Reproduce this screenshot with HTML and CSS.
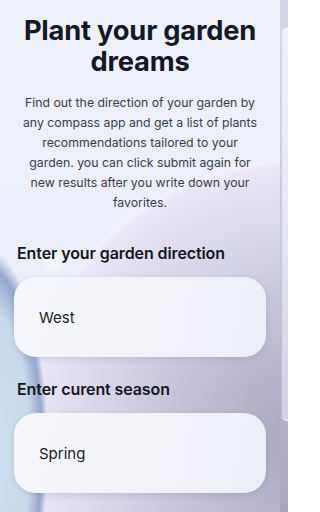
FILE: index.html
```html
<!DOCTYPE html>
<html lang="en">
<head>
<meta charset="utf-8">
<title>Plant your garden dreams</title>
<link rel="stylesheet" href="styles.css">
</head>
<body>
<div class="screen">
  <main class="page">
    <h1 class="title">Plant your garden dreams</h1>
    <p class="intro">Find out the direction of your garden by any compass app and get a list of plants recommendations tailored to your garden. you can click submit again for new results after you write down your favorites.</p>
    <section class="field">
      <label class="label" for="dir">Enter your garden direction</label>
      <div class="input" id="dir">West</div>
    </section>
    <section class="field">
      <label class="label" for="season">Enter curent season</label>
      <div class="input" id="season">Spring</div>
    </section>
  </main>
  <aside class="edge"><div class="edge-card"></div></aside>
</div>
</body>
</html>
```

FILE: styles.css
```css
html, body {
  margin: 0;
  padding: 0;
  width: 288px;
  height: 512px;
  overflow: hidden;
}

body {
  font-family: Inter, "Noto Sans", sans-serif;
}

.screen {
  display: flex;
  width: 288px;
  height: 512px;
}

.page {
  width: 280px;
  height: 512px;
  box-sizing: border-box;
  padding: 15px 14px 0 14px;
  display: flex;
  flex-direction: column;
  background:
    radial-gradient(circle 14px at 54px 262px, rgba(255,255,255,0.75), rgba(255,255,255,0) 100%),
    radial-gradient(ellipse 60px 200px at -12px 450px,
      rgba(208,226,239,1) 0,
      rgba(200,218,234,1) 70%,
      rgba(140,160,200,0.9) 90%,
      rgba(200,218,234,0) 100%),
    radial-gradient(circle 282px at 300px 440px,
      #a9a6c0 0,
      #bdbad2 35%,
      #d3d1e5 65%,
      #e2e0f1 88%,
      #ebe8f7 97%,
      #f3f0fc 99%,
      rgba(238,235,250,0) 100%),
    linear-gradient(180deg, #eef1fa 0, #eceff9 50%, #e2e6f1 100%);
}

.title {
  margin: 0;
  text-align: center;
  font-size: 27.3px;
  line-height: 31px;
  font-weight: 700;
  letter-spacing: -0.2px;
  color: #121828;
}

.intro {
  margin: 16px auto 0 auto;
  max-width: 239px;
  text-align: center;
  font-size: 12.3px;
  line-height: 20px;
  color: #3b3e4a;
}

.field {
  display: flex;
  flex-direction: column;
}

.field:first-of-type {
  margin-top: 30px;
}

.field + .field {
  margin-top: 22px;
}

.label {
  display: block;
  padding-left: 3px;
  font-size: 16px;
  line-height: 20px;
  font-weight: 600;
  letter-spacing: -0.1px;
  color: #14161e;
}

.input {
  margin-top: 14px;
  height: 80px;
  border-radius: 22px;
  box-sizing: border-box;
  padding-left: 25px;
  display: flex;
  align-items: center;
  font-size: 15px;
  color: #1b1d26;
  background: linear-gradient(100deg, #f6f7fb 0, #f1f2f8 60%, #eceef6 100%);
  box-shadow: 0 2px 6px rgba(90, 90, 130, 0.18);
}

.edge {
  width: 8px;
  height: 512px;
  background: linear-gradient(180deg, #d4d7e5 0, #c9c9de 50%, #a7a4bd 100%);
  display: flex;
  flex-direction: column;
  padding-top: 28px;
  box-sizing: border-box;
}

.edge-card {
  margin-left: 2px;
  height: 391px;
  border-radius: 5px 0 0 5px;
  border-top: 1.5px solid #ffffff;
  border-bottom: 1.5px solid #ffffff;
  background: linear-gradient(180deg, #eef1fa 0, #e6e8f4 45%, #d2d0e4 100%);
}
```
